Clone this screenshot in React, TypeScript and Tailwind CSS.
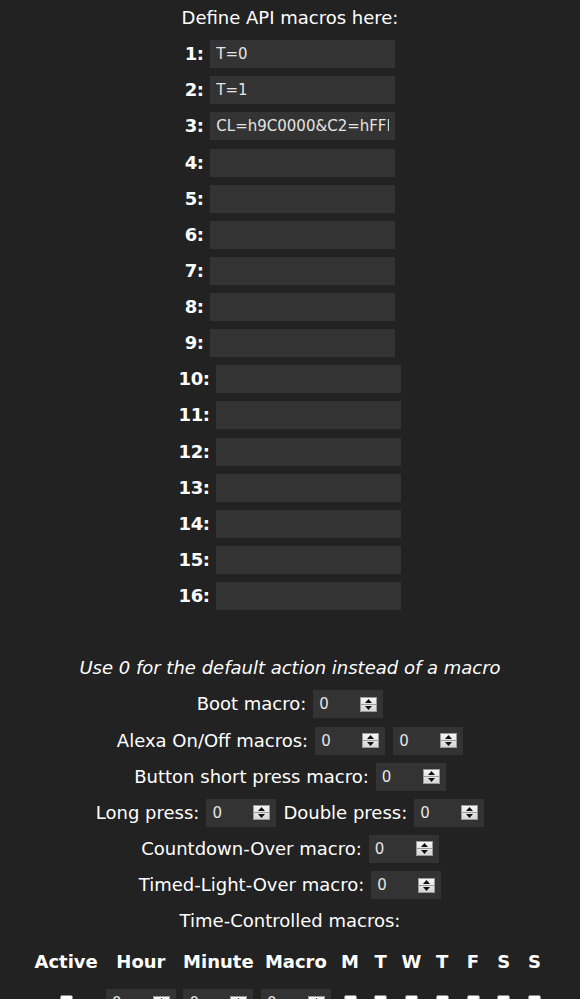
const macros = ['T=0', 'T=1', 'CL=h9C0000&C2=hFFE100&FX=0', '', '', '', '', '', '', '', '', '', '', '', '', ''];
const days = ['M', 'T', 'W', 'T', 'F', 'S', 'S'];

function Spinner() {
  return (
    <div className="flex h-[15px] w-[17px] flex-col border border-[#9a9a9a] bg-gradient-to-b from-[#f6f6f6] to-[#d6d6d6]">
      <div className="flex flex-1 items-center justify-center border-b border-[#9a9a9a]">
        <svg width="7" height="4" viewBox="0 0 7 4">
          <path d="M3.5 0L7 4H0z" fill="#111" />
        </svg>
      </div>
      <div className="flex flex-1 items-center justify-center">
        <svg width="7" height="4" viewBox="0 0 7 4">
          <path d="M0 0h7L3.5 4z" fill="#111" />
        </svg>
      </div>
    </div>
  );
}

function NumberBox({ value = '0' }: { value?: string }) {
  return (
    <div className="flex h-[28px] w-[70px] shrink-0 items-center justify-between bg-[#333] px-[6px] text-left text-[15px] leading-[28px] font-normal text-[#e4e4e4]">
      <span>{value}</span>
      <Spinner />
    </div>
  );
}

function Check() {
  return <div className="mx-auto h-[13px] w-[13px] rounded-[2px] border border-[#8a8a8a] bg-white" />;
}

function Line({ children }: { children: React.ReactNode }) {
  return <div className="flex h-[36.13px] items-center justify-center gap-[7px] whitespace-nowrap">{children}</div>;
}

export default function App() {
  return (
    <div className="h-[999px] overflow-hidden bg-[#222] text-center font-['DejaVu_Sans',Verdana,sans-serif] text-[18px] leading-[36.13px] text-white">
      <Line>Define API macros here:</Line>

      {/* API macro slots */}
      {macros.map((m, i) => (
        <Line key={i}>
          <b className="tracking-[-0.5px]">{i + 1}:</b>
          <input
            type="text"
            readOnly
            value={m}
            className="h-[28px] w-[185px] border-0 bg-[#333] px-[6px] text-[15px] text-[#e4e4e4] outline-none"
          />
        </Line>
      ))}

      <div className="h-[36.13px]" />

      <Line>
        <i>Use 0 for the default action instead of a macro</i>
      </Line>
      <Line>
        Boot macro: <NumberBox />
      </Line>
      <Line>
        Alexa On/Off macros:
        <div className="flex gap-[8px]">
          <NumberBox />
          <NumberBox />
        </div>
      </Line>
      <Line>
        Button short press macro: <NumberBox />
      </Line>
      <Line>
        Long press: <NumberBox /> Double press: <NumberBox />
      </Line>
      <Line>
        Countdown-Over macro: <NumberBox />
      </Line>
      <Line>
        Timed-Light-Over macro: <NumberBox />
      </Line>
      <Line>Time-Controlled macros:</Line>

      {/* Time-controlled table */}
      <div className="mt-[5px] flex justify-center">
        <div className="grid grid-cols-[70px_75.5px_75.5px_75.5px_repeat(7,28.75px)] gap-x-[2px] gap-y-[5px]">
          {['Active', 'Hour', 'Minute', 'Macro', ...days].map((h, i) => (
            <div key={i} className="flex h-[36px] items-center justify-center font-bold whitespace-nowrap">
              {h}
            </div>
          ))}
          {[0, 1, 2, 3, 4, 5, 6, 7].map((r) => (
            <div key={r} className="contents">
              <div className="flex h-[36px] items-center justify-center pb-[3px]">
                <Check />
              </div>
              {[0, 1, 2].map((c) => (
                <div key={c} className="flex h-[36px] items-center justify-center">
                  <NumberBox />
                </div>
              ))}
              {days.map((_, d) => (
                <div key={d} className="flex h-[36px] items-center justify-center pb-[3px]">
                  <Check />
                </div>
              ))}
            </div>
          ))}
        </div>
      </div>
    </div>
  );
}
